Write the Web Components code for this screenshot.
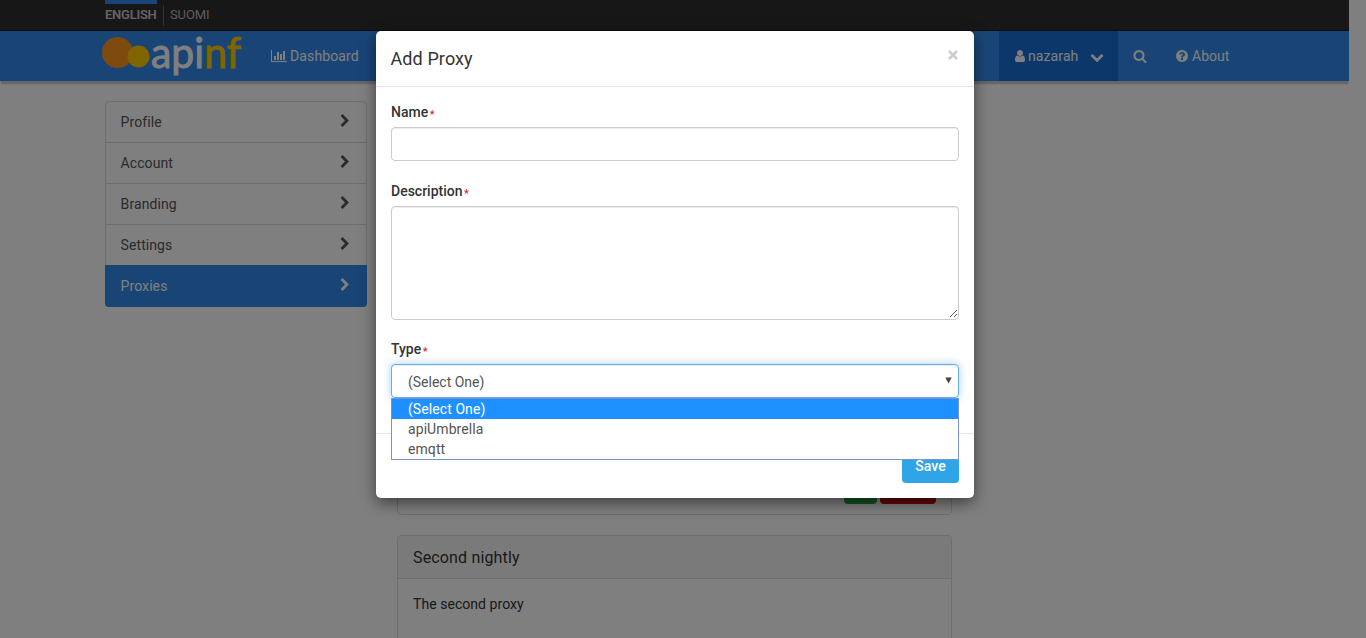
<!DOCTYPE html>
<html lang="en">
<head>
<meta charset="utf-8">
<title>Apinf</title>
<style>
html,body{margin:0;height:100%;overflow:hidden}
body{font:14px/20px Roboto,"Liberation Sans",sans-serif;color:#333;background:#fff}
</style>
</head>
<body>
<apinf-app></apinf-app>
<script>
const define = (name, html, setup) => customElements.define(name, class extends HTMLElement {
  connectedCallback() {
    if (this.shadowRoot) return;
    const t = document.createElement('template');
    t.innerHTML = '<style>*{box-sizing:border-box}</style>' + html;
    this.attachShadow({ mode: 'open' }).append(t.content.cloneNode(true));
    if (setup) setup(this, this.shadowRoot);
  }
});

const ICONS = {
  user: [1792, 'M1536 1399q0 109-62.5 187t-150.5 78h-854q-88 0-150.5-78t-62.5-187q0-85 8.5-160.5t31.5-152 58.5-131 94-89 134.5-34.5q131 128 313 128t313-128q76 0 134.5 34.5t94 89 58.5 131 31.5 152 8.5 160.5zm-256-887q0 159-112.5 271.5t-271.5 112.5-271.5-112.5-112.5-271.5 112.5-271.5 271.5-112.5 271.5 112.5 112.5 271.5z'],
  right: [1792, 'M1363 877l-742 742q-19 19-45 19t-45-19l-166-166q-19-19-19-45t19-45l531-531-531-531q-19-19-19-45t19-45l166-166q19-19 45-19t45 19l742 742q19 19 19 45t-19 45z'],
  down: [1792, 'M1683 808l-742 741q-19 19-45 19t-45-19l-742-741q-19-19-19-45.5t19-45.5l166-165q19-19 45-19t45 19l531 531 531-531q19-19 45-19t45 19l166 165q19 19 19 45.5t-19 45.5z'],
  search: [1792, 'M1216 832q0-185-131.5-316.5t-316.5-131.5-316.5 131.5-131.5 316.5 131.5 316.5 316.5 131.5 316.5-131.5 131.5-316.5zm512 832q0 52-38 90t-90 38q-54 0-90-38l-343-342q-179 124-399 124-143 0-273.5-55.5t-225-150-150-225-55.5-273.5 55.5-273.5 150-225 225-150 273.5-55.5 273.5 55.5 225 150 150 225 55.5 273.5q0 220-124 399l343 343q37 37 37 90z'],
  help: [1792, 'M1024 1376v-192q0-14-9-23t-23-9h-192q-14 0-23 9t-9 23v192q0 14 9 23t23 9h192q14 0 23-9t9-23zm256-672q0-88-55.5-163t-138.5-116-170-41q-243 0-371 213-15 24 8 42l132 100q7 6 19 6 16 0 25-12 53-68 86-92 34-24 86-24 48 0 85.5 26t37.5 59q0 38-20 61t-68 45q-63 28-115.5 86.5t-52.5 125.5v36q0 14 9 23t23 9h192q14 0 23-9t9-23q0-19 21.5-49.5t54.5-49.5q32-18 49-28.5t46-35 44.5-48 28-60.5 12.5-81zm384 192q0 209-103 385.5t-279.5 279.5-385.5 103-385.5-103-279.5-279.5-103-385.5 103-385.5 279.5-279.5 385.5-103 385.5 103 279.5 279.5 103 385.5z'],
  chart: [2048, 'M640 896v512h-256v-512h256zm384-512v1024h-256v-1024h256zm1024 1152v128h-2048v-1536h128v1408h1920zm-640-896v768h-256v-768h256zm384-384v1152h-256v-1152h256z']
};
define('ui-icon', `<style>:host{display:inline-flex;flex:none}svg{display:block;height:14px;fill:currentColor}</style><svg><path/></svg>`, (el, r) => {
  const [w, d] = ICONS[el.getAttribute('name')];
  const s = r.querySelector('svg');
  s.setAttribute('viewBox', `0 0 ${w} 1792`);
  s.style.width = w / 128 + 'px';
  r.querySelector('path').setAttribute('d', d);
});

define('language-bar', `<style>
:host{display:flex;height:31px;padding-left:105px;background:#2e2e2e;border-bottom:1px solid #1c1c1c;font-size:13px;color:#c8c8c8}
b,span{line-height:20px}
b{border-top:4px solid #328aec;width:52px;padding-top:1px;font-weight:600;letter-spacing:-.25px;white-space:nowrap}
i{width:1px;height:21px;margin:5px 6px 0;background:#626262}
span{padding-top:5px;color:#b8b8b8;letter-spacing:-.1px}
</style><b>ENGLISH</b><i></i><span>SUOMI</span>`);

define('apinf-logo', `<style>:host{display:block;width:145px;height:50px}svg{display:block;overflow:visible}text{font-family:Lato,sans-serif;font-size:42px}</style>
<svg width="145" height="50"><circle cx="16.5" cy="21.5" r="15.5" fill="#ff941e"/><circle cx="37.500" cy="25.500" r="11" fill="#ffc800"/>
<text x="50" y="36.500" font-weight="400" fill="#fff" stroke="#fff" stroke-width=".9" textLength="90" lengthAdjust="spacingAndGlyphs">api<tspan fill="#ffc800" stroke="#ffc800">nf</tspan></text></svg>`);

define('nav-bar', `<style>
:host{display:flex;height:50px;padding-left:101px;background:#328aec;color:#fff;box-shadow:0 4px 1px -1px rgba(0,0,0,.14),0 3px 3px rgba(0,0,0,.08);position:relative}
div{display:flex;align-items:center;gap:3px;height:50px}
.dash{margin-left:25px;width:88px;letter-spacing:.12px}
.user{margin-left:640px;width:119px;padding-left:14px;background:#196fd6;gap:1px;letter-spacing:.1px}
.user ui-icon:last-child{margin-left:11px;margin-top:1px}
.search{padding:0 15px}.about{margin-left:13px}
</style><apinf-logo></apinf-logo><div class="dash"><ui-icon name="chart"></ui-icon>Dashboard</div>
<div class="user"><ui-icon name="user"></ui-icon>nazarah<ui-icon name="down"></ui-icon></div>
<div class="search"><ui-icon name="search"></ui-icon></div><div class="about"><ui-icon name="help"></ui-icon>About</div>`);

define('side-item', `<style>
:host{display:flex;justify-content:space-between;height:41px;padding:10px 14px 0 14.600px;border-top:1px solid #ddd;color:#555;letter-spacing:.08px}
ui-icon{color:#555;margin-top:2px}
:host([active]){background:#328aec;color:#fff;border-color:#328aec;margin:0 -1px -1px;padding:10px 15px 0 15.600px;height:42px;border-radius:0 0 4px 4px}
:host([active]) ui-icon{color:#fff}
</style><slot></slot><ui-icon name="right"></ui-icon>`);

define('side-menu', `<style>:host{display:block;width:262px;border:1px solid #ddd;border-top:0;border-radius:4px}
side-item:nth-of-type(1){border-radius:4px 4px 0 0}</style>
<side-item>Profile</side-item><side-item>Account</side-item><side-item>Branding</side-item><side-item>Settings</side-item><side-item active>Proxies</side-item>`);

define('proxy-panel', `<style>
:host{display:block;width:555px;border:1px solid #ddd;border-radius:4px;background:#fff}
header{height:43px;padding:12px 15px 10px;background:#f5f5f5;border-bottom:1px solid #ddd;font-size:16px;letter-spacing:.16px;border-radius:3px 3px 0 0}
section{padding:15px;letter-spacing:.05px}
</style><header><slot name="title"></slot></header><section><slot></slot></section>`);

define('panel-actions', `<style>:host{display:flex;justify-content:flex-end;gap:3px;margin-top:310px}
i{height:34px;width:33px;background:#27a745;border-radius:4px}i+i{width:56px;background:#c9100e}</style><i></i><i></i>`);

define('form-field', `<style>
:host{display:block}
label{display:block;height:20px;margin-bottom:5px;font-weight:500}
sup{font-size:11px;line-height:1;color:#c9302c;margin-left:1.500px;vertical-align:-1px}
</style><label><slot name="label"></slot><sup>*</sup></label><slot></slot>`);

define('text-box', `<style>
:host{display:block}
input{display:block;width:100%;height:34px;border:1px solid #ccc;border-radius:4px;margin:0;padding:6px 12px;font:inherit;box-shadow:inset 0 1px 1px rgba(0,0,0,.075);outline:0}
div{display:flex;justify-content:flex-end;align-items:flex-end;height:114px;border:1px solid #ccc;border-radius:4px;box-shadow:inset 0 1px 1px rgba(0,0,0,.075)}
</style>`, (el, r) => {
  const d = document.createElement('template');
  d.innerHTML = el.hasAttribute('multiline')
    ? '<div><svg width="10" height="10" shape-rendering="crispEdges"><path d="M1.500 8.500L8.500 1.500M5.500 8.500L8.500 5.500" stroke="#555" fill="none"/></svg></div>'
    : '<input type="text">';
  r.append(d.content);
});

define('select-box', `<style>
:host{display:block;position:relative;color:#555}
.box{display:flex;justify-content:space-between;height:34px;border:1px solid #66afe9;border-radius:4px;padding:7px 6px 0 16px;box-shadow:inset 0 1px 1px rgba(0,0,0,.075),0 0 8px rgba(102,175,233,.6);background:#fff}
svg{margin-top:5px}
ul{position:absolute;top:34px;left:0;right:0;margin:0;padding:0;list-style:none;background:#fff;border:1px solid #7693cf;z-index:2}
li{height:20px;line-height:20px;padding-left:16px;letter-spacing:.08px}
li.on{background:#1e90ff;color:#fff}
</style><div class="box">(Select One)<svg width="7" height="7"><path d="M.3 .5h6.400L3.500 6.500z" fill="#444"/></svg></div>
<ul><li class="on">(Select One)</li><li>apiUmbrella</li><li>emqtt</li></ul>`);

define('modal-dialog', `<style>
:host{display:block;width:598px;height:467px;background:#fff;border-radius:5px;box-shadow:0 5px 15px rgba(0,0,0,.5)}
header{display:flex;justify-content:space-between;height:56px;padding:15px 15px 15px 14.500px;border-bottom:1px solid #e5e5e5;font-size:18px;letter-spacing:.1px;line-height:26px}
header svg{margin:4px 1px 0 0}
main{display:grid;gap:20px;height:346px;padding:15px;grid-template-rows:59px 138px 59px}
footer{display:flex;justify-content:flex-end;border-top:1px solid #e5e5e5;padding:15px;height:65px}
button{height:34px;width:57px;border:0;border-radius:4px;background:#2fa4e7;color:#fff;font:500 14px/20px Roboto,sans-serif;padding:0}
</style>
<header>Add Proxy<svg width="10" height="10"><path d="M1 1L9 9M9 1L1 9" stroke="#ccc" stroke-width="2.600"/></svg></header>
<main><form-field><span slot="label">Name</span><text-box></text-box></form-field>
<form-field><span slot="label">Description</span><text-box multiline></text-box></form-field>
<form-field><span slot="label">Type</span><select-box></select-box></form-field></main>
<footer><button>Save</button></footer>`);

define('apinf-app', `<style>
:host{display:block;height:638px;overflow:hidden;position:relative}
.page{padding-right:17px}
.body{display:flex;gap:30px;align-items:flex-start;padding:20px 0 0 105px}
.list{display:grid;gap:20px}
.first{height:414px}
.veil{position:absolute;inset:0;background:rgba(0,0,0,.5);display:flex;align-items:flex-start;padding:31px 0 0 376px}
</style>
<div class="page"><language-bar></language-bar><nav-bar></nav-bar>
<div class="body"><side-menu></side-menu><div class="list">
<proxy-panel class="first"><panel-actions></panel-actions></proxy-panel>
<proxy-panel style="height:130px"><span slot="title">Second nightly</span>The second proxy</proxy-panel></div></div></div>
<div class="veil"><modal-dialog></modal-dialog></div>`);
</script>
</body>
</html>
